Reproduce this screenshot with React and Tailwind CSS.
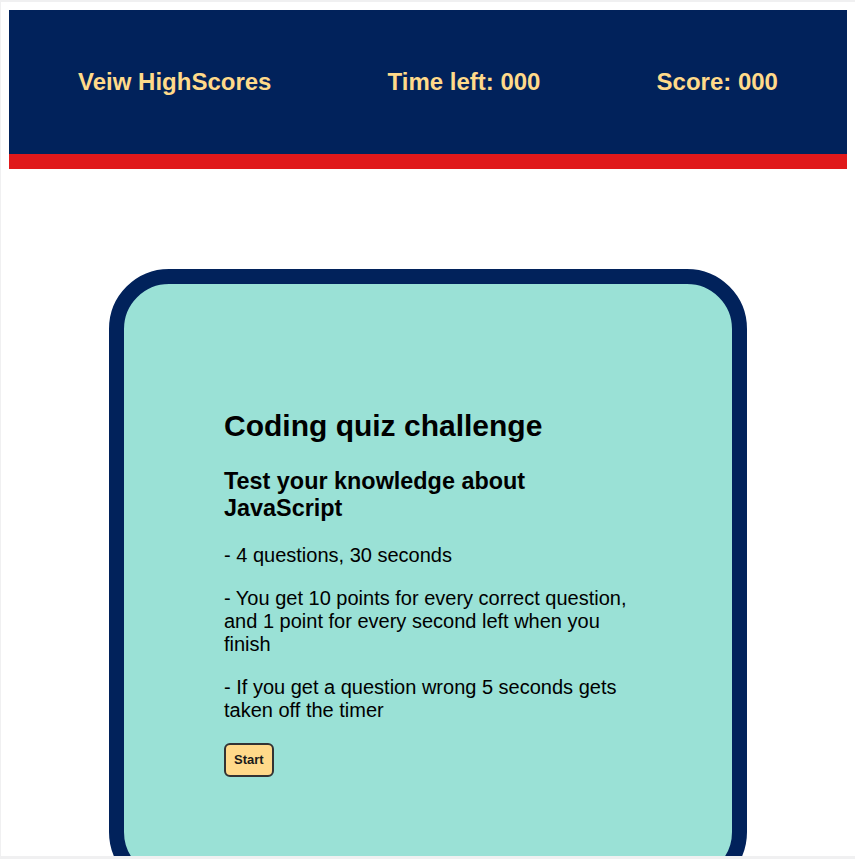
export default function App() {
  return (
    <div className="h-[859px] overflow-hidden bg-white border-t-2 border-l border-b-[3px] border-[#f0f0f1] font-['Liberation_Sans',Arial,sans-serif] text-black">
      <div className="px-2 pt-2">
        <header className="h-[159px] bg-[#01225b] border-b-[15px] border-[#e0191b] flex items-center justify-around px-[11px] text-[24px] font-bold text-[#ffda8a]">
          <a href="#">Veiw HighScores</a>
          <span>Time left: 000</span>
          <span>Score: 000</span>
        </header>
        <main className="mt-[100px] flex justify-center">
          <section className="w-[638px] rounded-[60px] border-[15px] border-[#01225b] bg-[#9ae1d6] px-[100px] pt-[105px] pb-[100px]">
            <h1 className="text-[30px] leading-[normal] font-bold my-[20px]">Coding quiz challenge</h1>
            <h3 className="text-[23.4px] leading-[normal] font-bold mt-[25px] mb-[22px]">
              Test your knowledge about JavaScript
            </h3>
            <p className="text-[20px] leading-[normal] my-[20px]">- 4 questions, 30 seconds</p>
            <p className="text-[20px] leading-[normal] my-[20px]">
              - You get 10 points for every correct question, and 1 point for every second left when you finish
            </p>
            <p className="text-[20px] leading-[normal] my-[20px]">
              - If you get a question wrong 5 seconds gets taken off the timer
            </p>
            <div className="pt-[1px]">
              <button className="text-[13px] font-bold leading-[16px] bg-[#ffd98a] border-2 border-[#333] rounded-[6px] px-[8px] py-[7px] text-[#1a1a1a]">
                Start
              </button>
            </div>
          </section>
        </main>
      </div>
    </div>
  )
}
